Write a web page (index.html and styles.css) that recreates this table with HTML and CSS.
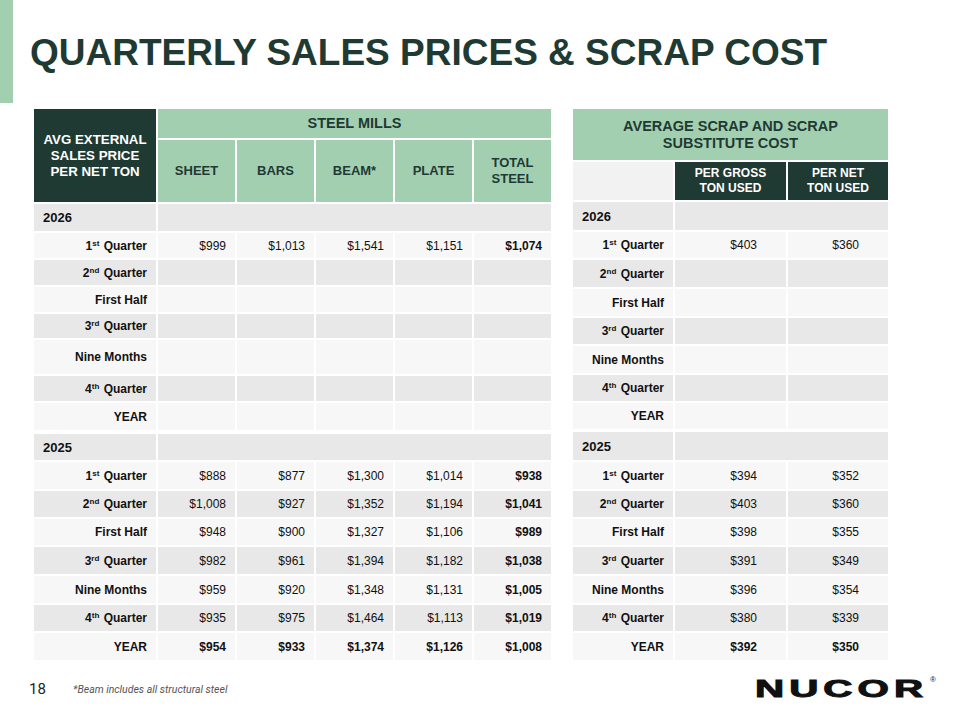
FILE: index.html
```html
<!DOCTYPE html>
<html lang="en">
<head>
<meta charset="utf-8">
<title>Quarterly Sales Prices &amp; Scrap Cost</title>
<link rel="stylesheet" href="styles.css">
</head>
<body>
<div class="page">
  <header class="top">
    <div class="accent"></div>
    <h1 class="title">QUARTERLY SALES PRICES &amp; SCRAP COST</h1>
  </header>

  <main class="tables">
    <!-- LEFT TABLE -->
    <section class="tbl lt">
      <div class="head">
        <div class="corner">AVG EXTERNAL<br>SALES PRICE<br>PER NET TON</div>
        <div class="group">STEEL MILLS</div>
        <div class="sub">SHEET</div>
        <div class="sub">BARS</div>
        <div class="sub">BEAM*</div>
        <div class="sub">PLATE</div>
        <div class="sub">TOTAL<br>STEEL</div>
      </div>

      <div class="block">
        <div class="row yr h27"><div class="c ylab">2026</div><div class="c rest"></div></div>
        <div class="row odd h25"><div class="c lab"><span>1<sup class="sp">st</sup> Quarter</span></div><div class="c num">$999</div><div class="c num">$1,013</div><div class="c num">$1,541</div><div class="c num">$1,151</div><div class="c num b">$1,074</div></div>
        <div class="row even h25"><div class="c lab"><span>2<sup class="sp">nd</sup> Quarter</span></div><div class="c"></div><div class="c"></div><div class="c"></div><div class="c"></div><div class="c"></div></div>
        <div class="row odd h25"><div class="c lab">First Half</div><div class="c"></div><div class="c"></div><div class="c"></div><div class="c"></div><div class="c"></div></div>
        <div class="row even h24"><div class="c lab"><span>3<sup class="sp">rd</sup> Quarter</span></div><div class="c"></div><div class="c"></div><div class="c"></div><div class="c"></div><div class="c"></div></div>
        <div class="row odd h34"><div class="c lab">Nine Months</div><div class="c"></div><div class="c"></div><div class="c"></div><div class="c"></div><div class="c"></div></div>
        <div class="row even h25"><div class="c lab"><span>4<sup class="sp">th</sup> Quarter</span></div><div class="c"></div><div class="c"></div><div class="c"></div><div class="c"></div><div class="c"></div></div>
        <div class="row odd h27"><div class="c lab">YEAR</div><div class="c"></div><div class="c"></div><div class="c"></div><div class="c"></div><div class="c"></div></div>
      </div>

      <div class="block second">
        <div class="row yr h26"><div class="c ylab">2025</div><div class="c rest"></div></div>
        <div class="row odd h27"><div class="c lab"><span>1<sup class="sp">st</sup> Quarter</span></div><div class="c num">$888</div><div class="c num">$877</div><div class="c num">$1,300</div><div class="c num">$1,014</div><div class="c num b">$938</div></div>
        <div class="row even h26"><div class="c lab"><span>2<sup class="sp">nd</sup> Quarter</span></div><div class="c num">$1,008</div><div class="c num">$927</div><div class="c num">$1,352</div><div class="c num">$1,194</div><div class="c num b">$1,041</div></div>
        <div class="row odd h26"><div class="c lab">First Half</div><div class="c num">$948</div><div class="c num">$900</div><div class="c num">$1,327</div><div class="c num">$1,106</div><div class="c num b">$989</div></div>
        <div class="row even h27"><div class="c lab"><span>3<sup class="sp">rd</sup> Quarter</span></div><div class="c num">$982</div><div class="c num">$961</div><div class="c num">$1,394</div><div class="c num">$1,182</div><div class="c num b">$1,038</div></div>
        <div class="row odd h27"><div class="c lab">Nine Months</div><div class="c num">$959</div><div class="c num">$920</div><div class="c num">$1,348</div><div class="c num">$1,131</div><div class="c num b">$1,005</div></div>
        <div class="row even h26"><div class="c lab"><span>4<sup class="sp">th</sup> Quarter</span></div><div class="c num">$935</div><div class="c num">$975</div><div class="c num">$1,464</div><div class="c num">$1,113</div><div class="c num b">$1,019</div></div>
        <div class="row odd h27"><div class="c lab">YEAR</div><div class="c num b">$954</div><div class="c num b">$933</div><div class="c num b">$1,374</div><div class="c num b">$1,126</div><div class="c num b">$1,008</div></div>
      </div>
    </section>

    <!-- RIGHT TABLE -->
    <section class="tbl rt">
      <div class="head">
        <div class="group">AVERAGE SCRAP AND SCRAP<br>SUBSTITUTE COST</div>
        <div class="blank"></div>
        <div class="dark">PER GROSS<br>TON USED</div>
        <div class="dark">PER NET<br>TON USED</div>
      </div>

      <div class="block">
        <div class="row yr h28"><div class="c ylab">2026</div><div class="c rest"></div></div>
        <div class="row odd h26"><div class="c lab"><span>1<sup class="sp">st</sup> Quarter</span></div><div class="c num">$403</div><div class="c num">$360</div></div>
        <div class="row even h27"><div class="c lab"><span>2<sup class="sp">nd</sup> Quarter</span></div><div class="c"></div><div class="c"></div></div>
        <div class="row odd h27"><div class="c lab">First Half</div><div class="c"></div><div class="c"></div></div>
        <div class="row even h26"><div class="c lab"><span>3<sup class="sp">rd</sup> Quarter</span></div><div class="c"></div><div class="c"></div></div>
        <div class="row odd h27"><div class="c lab">Nine Months</div><div class="c"></div><div class="c"></div></div>
        <div class="row even h26"><div class="c lab"><span>4<sup class="sp">th</sup> Quarter</span></div><div class="c"></div><div class="c"></div></div>
        <div class="row odd h26"><div class="c lab">YEAR</div><div class="c"></div><div class="c"></div></div>
      </div>

      <div class="block second">
        <div class="row yr h28"><div class="c ylab">2025</div><div class="c rest"></div></div>
        <div class="row odd h27"><div class="c lab"><span>1<sup class="sp">st</sup> Quarter</span></div><div class="c num">$394</div><div class="c num">$352</div></div>
        <div class="row even h26"><div class="c lab"><span>2<sup class="sp">nd</sup> Quarter</span></div><div class="c num">$403</div><div class="c num">$360</div></div>
        <div class="row odd h26"><div class="c lab">First Half</div><div class="c num">$398</div><div class="c num">$355</div></div>
        <div class="row even h27"><div class="c lab"><span>3<sup class="sp">rd</sup> Quarter</span></div><div class="c num">$391</div><div class="c num">$349</div></div>
        <div class="row odd h27"><div class="c lab">Nine Months</div><div class="c num">$396</div><div class="c num">$354</div></div>
        <div class="row even h26"><div class="c lab"><span>4<sup class="sp">th</sup> Quarter</span></div><div class="c num">$380</div><div class="c num">$339</div></div>
        <div class="row odd h27"><div class="c lab">YEAR</div><div class="c num b">$392</div><div class="c num b">$350</div></div>
      </div>
    </section>
  </main>

  <footer class="foot">
    <span class="pnum">18</span>
    <span class="note">*Beam includes all structural steel</span>
    <div class="logo">
      <div class="logo-box"><span class="logo-text">NUCOR</span></div>
      <span class="reg">®</span>
    </div>
  </footer>
</div>
</body>
</html>
```

FILE: styles.css
```css
* { box-sizing: border-box; }

html, body {
  margin: 0;
  padding: 0;
  background: #ffffff;
}

body {
  font-family: "Liberation Sans", Arial, sans-serif;
  color: #111111;
}

.page {
  width: 960px;
  height: 720px;
  overflow: hidden;
}

/* ---------- title ---------- */
.top {
  display: flex;
  height: 103px;
}

.accent {
  width: 13px;
  height: 103px;
  background: #a3cfb1;
}

.title {
  margin: 0 0 0 17px;
  padding-top: 34px;
  font-size: 37px;
  line-height: 37px;
  font-weight: bold;
  color: #1f3a33;
  white-space: nowrap;
}

/* ---------- tables ---------- */
.tables {
  display: flex;
  align-items: flex-start;
  gap: 22px;
  margin-top: 6px;
  padding-left: 34px;
}

.tbl {
  display: flex;
  flex-direction: column;
  gap: 2px;
}

.block {
  display: flex;
  flex-direction: column;
  gap: 2px;
}

.lt .block.second { margin-top: 2px; }
.rt .block.second { margin-top: 1px; }

.row {
  display: grid;
  column-gap: 2px;
}

.lt .row,
.lt .head {
  grid-template-columns: 122px repeat(5, 77px);
}

.rt .row,
.rt .head {
  grid-template-columns: 100px 111px 100px;
}

.h24 { height: 24px; }
.h25 { height: 25px; }
.h26 { height: 26px; }
.h27 { height: 27px; }
.h28 { height: 28px; }
.h34 { height: 34px; }

/* header */
.head {
  display: grid;
  gap: 2px;
  font-weight: bold;
  text-align: center;
}

.lt .head {
  grid-template-rows: 29px 62px;
}

.rt .head {
  grid-template-rows: 51px 38px;
}

.head > div {
  display: flex;
  align-items: center;
  justify-content: center;
}

.corner {
  grid-row: 1 / 3;
  background: #1f3a33;
  color: #ffffff;
  font-size: 13.3px;
  line-height: 16px;
}

.group {
  grid-column: 2 / -1;
  background: #a3cfb1;
  color: #1f3a33;
  font-size: 14.5px;
  line-height: 17px;
}

.rt .group {
  grid-column: 1 / -1;
}

.sub {
  background: #a3cfb1;
  color: #1f3a33;
  font-size: 13px;
  line-height: 16px;
}

.blank {
  background: #f2f2f2;
}

.dark {
  background: #1f3a33;
  color: #ffffff;
  font-size: 12px;
  line-height: 15px;
}

/* body cells */
.c {
  display: flex;
  align-items: center;
  justify-content: flex-end;
  padding-right: 9px;
  font-size: 12px;
  white-space: nowrap;
}

.row.odd > .c { background: #f7f7f7; }
.row.even > .c { background: #e8e8e8; }
.row.yr > .c { background: #e8e8e8; }

.lab {
  font-weight: bold;
}

.ylab {
  justify-content: flex-start;
  padding-left: 9px;
  font-size: 13px;
  font-weight: bold;
}

.rest {
  grid-column: 2 / -1;
}

.rt .num {
  padding-right: 29px;
}

.b { font-weight: bold; }

.sp {
  font-size: 8px;
  line-height: 0;
  vertical-align: 4px;
  margin-right: 1px;
}

/* ---------- footer ---------- */
.foot {
  display: flex;
  align-items: center;
  height: 22px;
  margin-top: 18px;
  padding-left: 29px;
  padding-right: 24px;
}

.pnum {
  font-family: Roboto, "Liberation Sans", sans-serif;
  font-size: 15px;
  color: #222222;
  width: 44px;
}

.note {
  font-family: Roboto, "Liberation Sans", sans-serif;
  font-style: italic;
  font-size: 10.5px;
  color: #555555;
}

.logo {
  margin-left: auto;
  display: flex;
  align-items: flex-start;
  gap: 1px;
  height: 22px;
}

.logo-box {
  width: 174px;
  height: 22px;
  overflow: visible;
}

.logo-text {
  display: inline-block;
  font-family: "Liberation Sans", Arial, sans-serif;
  font-weight: bold;
  font-size: 24px;
  line-height: 22px;
  letter-spacing: 3px;
  color: #111111;
  -webkit-text-stroke: 1px #111111;
  transform: scaleX(1.68);
  transform-origin: 0 50%;
}

.reg {
  font-size: 8px;
  line-height: 8px;
  color: #111111;
  margin-top: -2px;
}
```
